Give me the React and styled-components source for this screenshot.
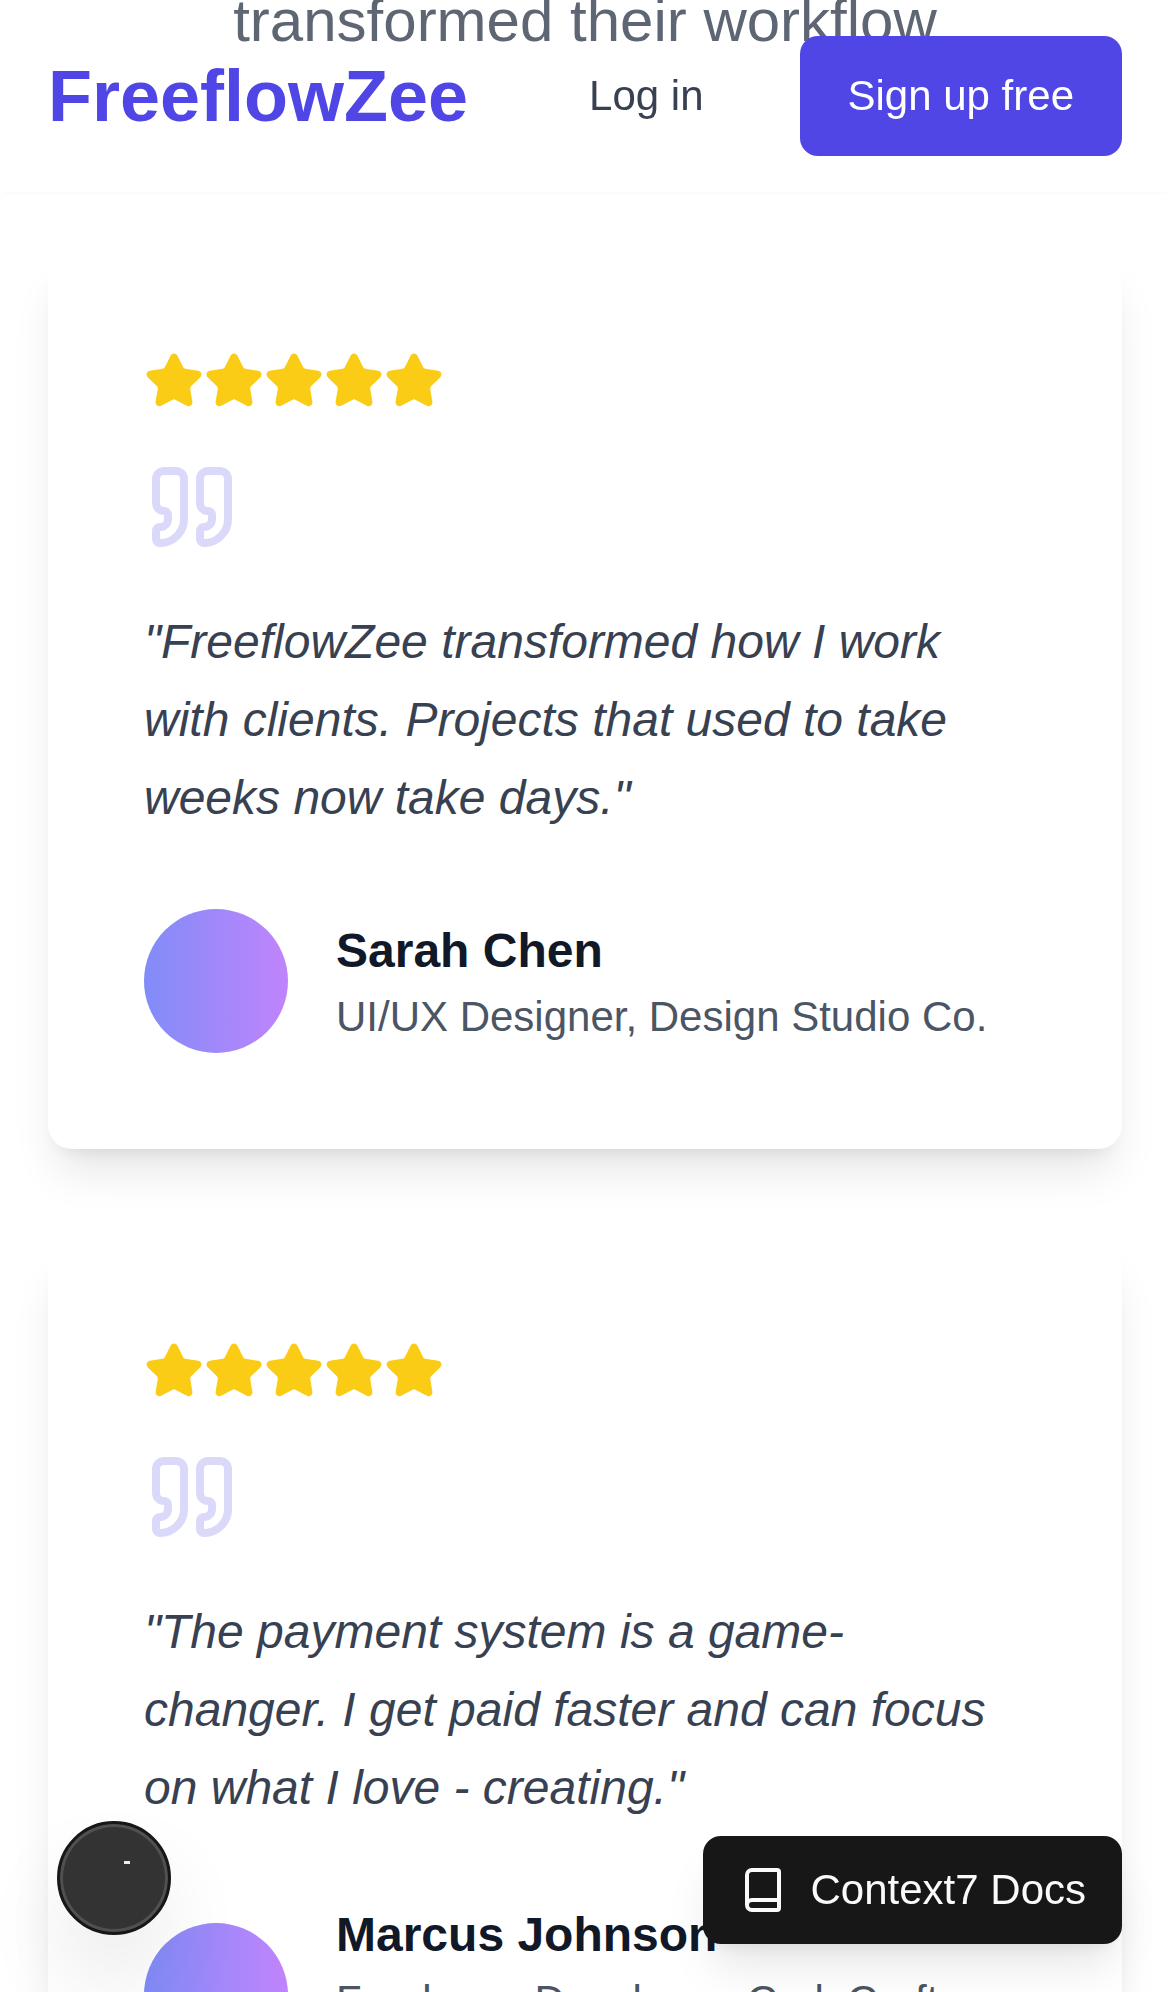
import React from "react";
import styled, { createGlobalStyle } from "styled-components";
import { Book, Quote, Star } from "lucide-react";

const Global = createGlobalStyle`
  *, *::before, *::after { box-sizing: border-box; }
  html { background: #ffffff; }
  body {
    margin: 0;
    height: 100vh;
    overflow: hidden;
    color: #111827;
    font-family: "Liberation Sans", Arial, sans-serif;
    font-size: 48px;
    line-height: 72px;
  }
  h3, p, blockquote, figure { margin: 0; }
`;

const Header = styled.header`
  position: fixed;
  z-index: 10;
  top: 0;
  left: 0;
  right: 0;
  height: 192px;
  padding: 0 48px;
  display: flex;
  align-items: center;
  justify-content: space-between;
  background: rgba(255, 255, 255, 0.1);
  box-shadow: 0 3px 6px -3px rgba(0, 0, 0, 0.04);
`;

const Logo = styled.a`
  color: #4f46e5;
  font-size: 72px;
  line-height: 96px;
  font-weight: 700;
  text-decoration: none;
`;

const Nav = styled.nav`
  display: flex;
  align-items: center;
  gap: 48px;
`;

const NavButton = styled.button`
  height: 120px;
  padding: 0 48px;
  border: 0;
  border-radius: 18px;
  background: ${(p) => (p.$primary ? "#4f46e5" : "transparent")};
  color: ${(p) => (p.$primary ? "#ffffff" : "#374151")};
  font: inherit;
  font-size: 42px;
  line-height: 60px;
  cursor: pointer;
`;

const Section = styled.section`
  padding: 0 48px;
`;

const Intro = styled.div`
  height: 63px;
  margin-bottom: 192px;
  display: flex;
  align-items: flex-end;
  justify-content: center;
  color: #4b5563;
  font-size: 60px;
  line-height: 84px;
  text-align: center;
`;

const Cards = styled.div`
  display: grid;
  gap: 96px;
`;

const Card = styled.figure`
  padding: 96px;
  border-radius: 24px;
  background: #ffffff;
  box-shadow: 0 30px 45px -9px rgba(0, 0, 0, 0.1), 0 12px 18px -12px rgba(0, 0, 0, 0.1);
`;

const Stars = styled.div`
  display: flex;
  margin-bottom: 48px;
  color: #facc15;
`;

const QuoteMark = styled(Quote)`
  display: block;
  margin-bottom: 48px;
  color: #4f46e5;
  opacity: 0.2;
`;

const QuoteText = styled.blockquote`
  margin-bottom: 72px;
  color: #374151;
  font-style: italic;
  line-height: 78px;
`;

const Author = styled.figcaption`
  display: flex;
  align-items: center;
  gap: 48px;
`;

const Avatar = styled.div`
  flex: none;
  width: 144px;
  height: 144px;
  border-radius: 50%;
  background: linear-gradient(to right, #818cf8, #c084fc);
`;

const Name = styled.h3`
  font-size: 48px;
  line-height: 72px;
  font-weight: 700;
`;

const Role = styled.p`
  color: #4b5563;
  font-size: 42px;
  line-height: 60px;
`;

const DocsButton = styled.button`
  position: fixed;
  z-index: 20;
  right: 48px;
  bottom: 48px;
  height: 108px;
  padding: 0 36px;
  display: flex;
  align-items: center;
  gap: 24px;
  border: 0;
  border-radius: 18px;
  background: #171717;
  color: #fafafa;
  font: inherit;
  font-size: 42px;
  line-height: 60px;
  box-shadow: 0 30px 45px -9px rgba(0, 0, 0, 0.1), 0 12px 18px -12px rgba(0, 0, 0, 0.1);
  cursor: pointer;
`;

const DevBadge = styled.button`
  position: fixed;
  z-index: 20;
  left: 57px;
  bottom: 57px;
  width: 114px;
  height: 114px;
  padding: 0;
  border: 3px solid #171717;
  border-radius: 50%;
  background: #333333;
  box-shadow: inset 0 0 0 3px #505050, 0 48px 96px -24px rgba(0, 0, 0, 0.24);
  cursor: pointer;

  svg { display: block; }
`;

const testimonials = [
  {
    quote: "FreeflowZee transformed how I work with clients. Projects that used to take weeks now take days.",
    name: "Sarah Chen",
    role: "UI/UX Designer, Design Studio Co.",
  },
  {
    quote: "The payment system is a game-changer. I get paid faster and can focus on what I love - creating.",
    name: "Marcus Johnson",
    role: "Freelance Developer, CodeCraft Solutions",
  },
];

function Testimonial({ quote, name, role }) {
  return (
    <Card>
      <Stars role="img" aria-label="5 out of 5 stars">
        {[1, 2, 3, 4, 5].map((n) => (
          <Star key={n} size={60} fill="currentColor" />
        ))}
      </Stars>
      <QuoteMark size={96} aria-hidden="true" />
      <QuoteText>{`"${quote}"`}</QuoteText>
      <Author>
        <Avatar />
        <div>
          <Name>{name}</Name>
          <Role>{role}</Role>
        </div>
      </Author>
    </Card>
  );
}

export default function App() {
  return (
    <>
      <Global />
      <Header>
        <Logo href="#">FreeflowZee</Logo>
        <Nav>
          <NavButton type="button">Log in</NavButton>
          <NavButton type="button" $primary>Sign up free</NavButton>
        </Nav>
      </Header>
      <Section>
        <Intro>
          <p>transformed their workflow</p>
        </Intro>
        <Cards>
          {testimonials.map((t) => (
            <Testimonial key={t.name} {...t} />
          ))}
        </Cards>
      </Section>
      <DevBadge type="button" aria-label="Open developer tools">
        <svg width="108" height="108" viewBox="0 0 108 108" aria-hidden="true">
          <rect x="64" y="37" width="6" height="3" fill="#eeeeee" />
        </svg>
      </DevBadge>
      <DocsButton type="button">
        <Book size={48} aria-hidden="true" />
        Context7 Docs
      </DocsButton>
    </>
  );
}
